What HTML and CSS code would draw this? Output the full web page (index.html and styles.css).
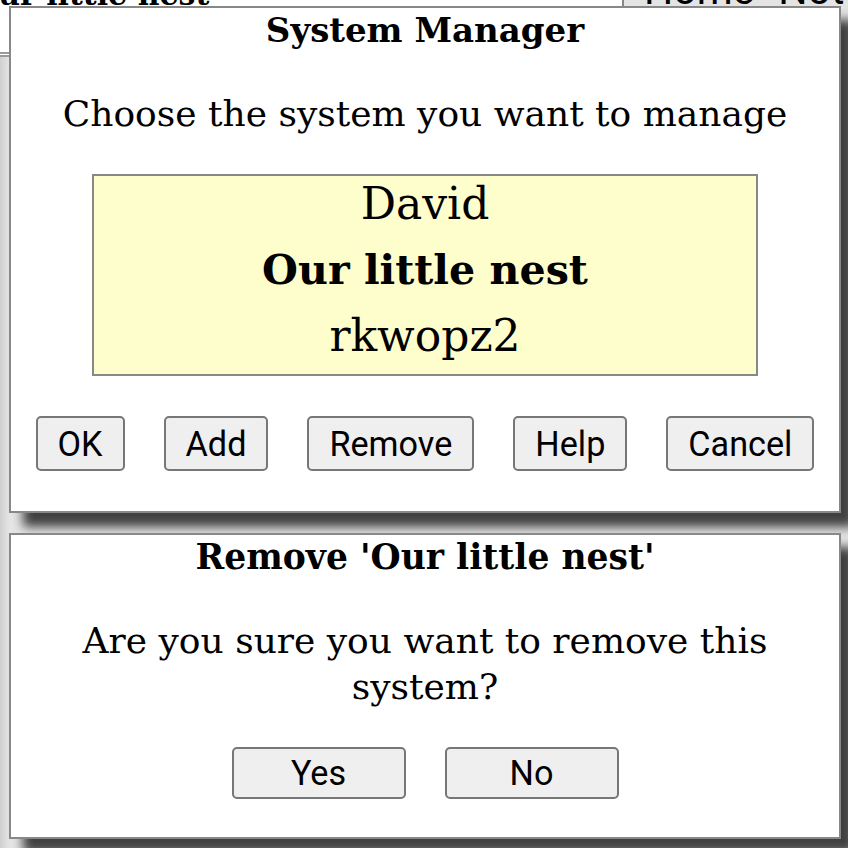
FILE: index.html
```html
<!DOCTYPE html>
<html lang="en">
<head>
<meta charset="utf-8">
<title>System Manager</title>
<link rel="stylesheet" href="styles.css">
</head>
<body>
<div class="page">
  <header class="page-header">
    <h1 class="page-title">Our little nest</h1>
    <nav class="page-nav">
      <span class="nav-btn">Home</span>
      <span class="nav-btn">Notes</span>
    </nav>
  </header>
  <div class="page-body"></div>
</div>

<div class="modal-layer">
  <section class="dialog dialog-main">
    <h2 class="dialog-title">System Manager</h2>
    <p class="dialog-text">Choose the system you want to manage</p>
    <ul class="system-list">
      <li class="system-item">David</li>
      <li class="system-item selected">Our little nest</li>
      <li class="system-item">rkwopz2</li>
    </ul>
    <div class="button-row">
      <button class="btn" type="button">OK</button>
      <button class="btn" type="button">Add</button>
      <button class="btn" type="button">Remove</button>
      <button class="btn" type="button">Help</button>
      <button class="btn" type="button">Cancel</button>
    </div>
  </section>

  <section class="dialog dialog-confirm">
    <h2 class="dialog-title confirm-title">Remove 'Our little nest'</h2>
    <p class="dialog-text confirm-text">Are you sure you want to remove this system?</p>
    <div class="button-row">
      <button class="btn btn-wide" type="button">Yes</button>
      <button class="btn btn-wide" type="button">No</button>
    </div>
  </section>
</div>
</body>
</html>
```

FILE: styles.css
```css
* { box-sizing: border-box; }

html, body {
  margin: 0;
  padding: 0;
  width: 848px;
  height: 848px;
  overflow: hidden;
}

body {
  background: #e3e3e3;
  font-family: "DejaVu Serif", serif;
  color: #000;
}

.page-header {
  display: flex;
  align-items: flex-start;
  height: 57px;
  background: #fff;
  border-bottom: 5px double #9a9a9a;
}

.page-title {
  flex: 1;
  margin: -25px 0 0 -28px;
  font-size: 30px;
  line-height: 40px;
  font-weight: bold;
  white-space: nowrap;
}

.page-nav {
  flex: none;
  width: 226px;
  height: 57px;
  display: flex;
  gap: 24px;
  padding-left: 20px;
  background: #e4e4e4;
  border-left: 2px solid #888;
  overflow: hidden;
}

.nav-btn {
  margin-top: -30px;
  font-family: Roboto, sans-serif;
  font-size: 41px;
  line-height: 40px;
  white-space: nowrap;
}

.page-body {
  height: 791px;
  background: linear-gradient(90deg, #cfcfcf 0, #e6e6e6 10px);
}

/* modal overlay */
.modal-layer {
  position: absolute;
  top: 6px;
  left: 9px;
  width: 832px;
  display: flex;
  flex-direction: column;
  gap: 20px;
}

.dialog {
  background: #fff;
  border: 2px solid #888;
  box-shadow: 14px 14px 10px rgba(0, 0, 0, 0.72);
  text-align: center;
}

.dialog-main {
  padding: 0 0 40px;
}

.dialog-confirm {
  padding: 0 40px 38px;
}

.dialog-title {
  margin: 0;
  font-size: 34px;
  line-height: 44px;
  font-weight: bold;
}

.confirm-title {
  font-size: 34.6px;
}

.dialog-text {
  margin: 40px 0 0;
  padding-bottom: 2px;
  font-size: 36px;
  line-height: 44px;
  font-weight: normal;
}

.confirm-text {
  margin-top: 39px;
  padding-bottom: 0;
  line-height: 46px;
}

.system-list {
  list-style: none;
  margin: 36px auto 0;
  padding: 0;
  width: 666px;
  background: #fefdcc;
  border: 2px solid #888;
}

.system-item {
  font-size: 44px;
  line-height: 56px;
  padding-bottom: 10px;
}

.system-item.selected {
  font-size: 41.2px;
  font-weight: bold;
}

.button-row {
  display: flex;
  justify-content: center;
  gap: 39px;
  margin-top: 40px;
}

.dialog-confirm .button-row {
  margin-top: 37px;
}

.btn {
  height: 55px;
  padding: 0 20px;
  font-family: Roboto, sans-serif;
  font-size: 34.2px;
  color: #000;
  background: #efefef;
  border: 2px solid #777;
  border-radius: 5px;
}

.btn-wide {
  width: 174px;
  height: 52px;
}
```
